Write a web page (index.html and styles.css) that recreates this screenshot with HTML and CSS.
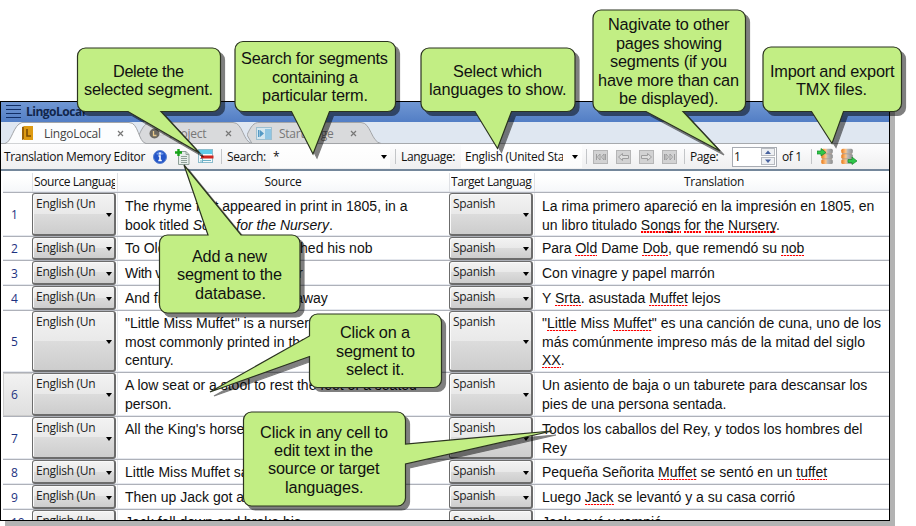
FILE: index.html
```html
<!DOCTYPE html>
<html lang="en">
<head>
<meta charset="utf-8">
<title>LingoLocal</title>
<link rel="stylesheet" href="styles.css">
</head>
<body>
<div class="page">
<main class="window">
  <header class="titlebar">
    <svg class="burger" width="15" height="14" viewBox="0 0 15 14"><path d="M0 .5h15M0 4.5h15M0 8.5h15M0 12.5h15"/></svg>
    <span class="app-name">LingoLocal</span>
  </header>
  <nav class="tabs">
    <div class="tab active">
      <svg class="shape" width="141" height="22" viewBox="0 0 141 22"><path d="M0 21.5C7 20 8 3 17 .5H124C134 .5 133 20 141 21.5"/></svg>
      <svg class="tab-icon" width="13" height="16" viewBox="0 0 13 16"><path d="M1 2L4 1V14L1 15Z" fill="#9a6208"/><rect x="3" y="1" width="9" height="14" fill="#dd9a12"/><path d="M6 4v7h4" stroke="#7a4b05" stroke-width="1.6" fill="none"/></svg>
      <span class="tab-label l1">LingoLocal</span><svg class="close" width="7" height="7" viewBox="0 0 7 7"><path d="M1 1l5 5M6 1l-5 5"/></svg>
    </div>
    <div class="tab second">
      <svg class="shape" width="113" height="22" viewBox="0 0 113 22"><path d="M0 13C4 4 7 .5 12 .5H94C104 .5 104 20 113 21.5H3Z"/></svg>
      <svg class="tab-icon" width="16" height="14" viewBox="0 0 16 14"><rect x="8" y="1" width="7" height="8" fill="#e4e4e4" stroke="#bbb" stroke-width=".6"/><circle cx="5.500" cy="7.500" r="5" fill="#6c6860"/><path d="M4.500 5v4.500h3" stroke="#e8c98c" stroke-width="1.300" fill="none"/></svg>
      <span class="tab-label l2">Project</span><svg class="close" width="7" height="7" viewBox="0 0 7 7"><path d="M1 1l5 5M6 1l-5 5"/></svg>
    </div>
    <div class="tab third">
      <svg class="shape" width="134" height="22" viewBox="0 0 134 22"><path d="M0 13C4 4 7 .5 12 .5H114C124 .5 124 20 134 21.5H5Z"/></svg>
      <svg class="tab-icon" width="16" height="13" viewBox="0 0 16 13"><rect x=".5" y=".5" width="15" height="12" fill="#d5e7f0" stroke="#9dbfd0"/><rect x="9" y="2" width="6" height="10" fill="#8fc5e3"/><path d="M2 3h1.500v7H2zM4 3l4 3.500L4 10z" fill="#5399c4"/></svg>
      <span class="tab-label l3">Start Page</span><svg class="close" width="7" height="7" viewBox="0 0 7 7"><path d="M1 1l5 5M6 1l-5 5"/></svg>
    </div>
  </nav>
  <section class="toolbar">
    <span class="tool-title">Translation Memory Editor</span>
    <svg class="i-info" width="14" height="14" viewBox="0 0 14 14"><circle cx="7" cy="7" r="6.500" fill="#2556c8" stroke="#5c83cf"/><path d="M3 4Q7 0 11 4Q7 6 3 4" fill="#6d97ea"/><path d="M7 2.500v2M5.500 6H7v4.500M5.300 10.500h3.500" stroke="#fff" stroke-width="1.600" fill="none"/></svg>
    <svg class="i-add" width="16" height="16" viewBox="0 0 16 16"><path d="M3.500 2.500H11l3 3v10H3.500Z" fill="#e6eeea" stroke="#8fa098"/><path d="M11 2.500v3h3M6 7.500h6M6 9.500h6M6 11.500h6M6 13.500h6" stroke="#8fa098" fill="none"/><path d="M3.500 0v7M0 3.500h7" stroke="#16a318" stroke-width="2.400"/></svg>
    <svg class="i-del" width="16" height="15" viewBox="0 0 16 15"><rect x=".5" y=".5" width="14" height="13" fill="#f5fafc" stroke="#8bbccc"/><rect x="1" y="1" width="13" height="4" fill="#5fcbea"/><path d="M2 6.500h2M2 9.500h2M2 12h2M5 11.500h8M4.500 5v9" stroke="#6db2c8"/><path d="M3 8h12.500" stroke="#cf2620" stroke-width="3"/></svg>
    <i class="sep"></i>
    <span class="t-search">Search:</span>
    <div class="combo c-search"><span>*</span><i class="arrow"></i></div>
    <i class="sep s2"></i>
    <span class="t-lang">Language:</span>
    <div class="combo c-lang"><span>English (United States)</span><i class="arrow"></i></div>
    <i class="sep s3"></i>
    <div class="pager">
      <svg width="15" height="14" viewBox="0 0 15 14"><rect class="b" x=".5" y=".5" width="14" height="13"/><path class="g" d="M3.500 4v6M7 4v6L4.500 7ZM11 4v6L8.500 7ZM12.500 4v6"/></svg>
      <svg width="15" height="14" viewBox="0 0 15 14"><rect class="b" x=".5" y=".5" width="14" height="13"/><path class="g" d="M2.500 7L6.500 3.500v2h6v3h-6v2Z"/></svg>
      <svg width="15" height="14" viewBox="0 0 15 14"><rect class="b" x=".5" y=".5" width="14" height="13"/><path class="g" d="M12.500 7L8.500 3.500v2h-6v3h6v2Z"/></svg>
      <svg width="15" height="14" viewBox="0 0 15 14"><rect class="b" x=".5" y=".5" width="14" height="13"/><path class="g" d="M2.500 4v6M4 4v6L6.500 7ZM8 4v6L10.500 7ZM12.500 4v6"/></svg>
    </div>
    <i class="sep s4"></i>
    <span class="t-page">Page:</span>
    <div class="spinner"><span>1</span><svg width="15" height="18" viewBox="0 0 15 18"><rect x=".5" y=".5" width="13" height="7" /><rect x=".5" y="9.500" width="13" height="7"/><path d="M4 6h6L7 2.500ZM4 11.500h6L7 15Z"/></svg></div>
    <span class="t-of">of 1</span>
    <i class="sep s5"></i>
    <svg class="i-imp" width="17" height="17" viewBox="0 0 17 17"><use href="#drum" x="4"/><path d="M0 3h4V.5L9 4.500 4 8V6H0Z" fill="#2fc84a" stroke="#18862b" stroke-width=".7"/></svg>
    <svg class="i-exp" width="17" height="17" viewBox="0 0 17 17"><defs><linearGradient id="o"><stop stop-color="#e97916"/><stop offset=".4" stop-color="#fdc58b"/><stop offset=".55" stop-color="#b9b9b9"/><stop offset="1" stop-color="#8d8d8d"/></linearGradient><g id="drum"><rect x=".3" y=".8" width="11.500" height="4.700" rx="1.500" fill="url(#o)"/><rect x=".3" y="6" width="11.500" height="4.700" rx="1.500" fill="url(#o)"/><rect x=".3" y="11.200" width="11.500" height="4.700" rx="1.500" fill="url(#o)"/><path d="M1 5.700h10M1 10.900h10" stroke="#8f7765" stroke-width=".6"/></g></defs><use href="#drum"/><path d="M7 11.500h4V9l5 4-5 3.500v-2H7Z" fill="#2fc84a" stroke="#18862b" stroke-width=".7"/></svg>
  </section>
  <section class="grid">
    <div class="row head"><span></span><span class="h">Source Language</span><span class="h mid">Source</span><span class="h">Target Language</span><span class="h mid tr">Translation</span></div>
    <div class="row r44 first"><b>1</b><button>English (Un<i class="arrow"></i></button><p>The rhyme first appeared in print in 1805, in a<br>book titled <em>Songs for the Nursery</em>.</p><button>Spanish<i class="arrow"></i></button><p>La rima primero apareció en la impresión en 1805, en<br>un libro titulado <u>Songs</u> <u>for</u> <u>the</u> <u>Nursery</u>.</p></div>
    <div class="row r24"><b>2</b><button>English (Un<i class="arrow"></i></button><p>To Old Dame Dob, who patched his nob</p><button>Spanish<i class="arrow"></i></button><p>Para <u>Old</u> Dame <u>Dob</u>, que remendó su <u>nob</u></p></div>
    <div class="row"><b>3</b><button>English (Un<i class="arrow"></i></button><p class="tight">With vinegar and brown paper</p><button>Spanish<i class="arrow"></i></button><p>Con vinagre y papel marrón</p></div>
    <div class="row"><b>4</b><button>English (Un<i class="arrow"></i></button><p>And frightened Miss Muffet away</p><button>Spanish<i class="arrow"></i></button><p>Y <u>Srta</u>. asustada <u>Muffet</u> lejos</p></div>
    <div class="row r62"><b>5</b><button>English (Un<i class="arrow"></i></button><p>"Little Miss Muffet" is a nursery rhyme, one of<br>most commonly printed in the mid-twentieth<br>century.</p><button>Spanish<i class="arrow"></i></button><p>"<u>Little</u> Miss <u>Muffet</u>" es una canción de cuna, uno de los<br>más comúnmente impreso más de la mitad del siglo<br><u>XX</u>.</p></div>
    <div class="row r44 selected"><b>6</b><button>English (Un<i class="arrow"></i></button><p>A low seat or a stool to rest the feet of a seated<br>person.</p><button>Spanish<i class="arrow"></i></button><p>Un asiento de baja o un taburete para descansar los<br>pies de una persona sentada.</p></div>
    <div class="row r43"><b>7</b><button>English (Un<i class="arrow"></i></button><p>All the King's horses</p><button>Spanish<i class="arrow"></i></button><p>Todos los caballos del Rey, y todos los hombres del<br>Rey</p></div>
    <div class="row"><b>8</b><button>English (Un<i class="arrow"></i></button><p>Little Miss Muffet sat on a tuffet</p><button>Spanish<i class="arrow"></i></button><p>Pequeña Señorita <u>Muffet</u> se sentó en un <u>tuffet</u></p></div>
    <div class="row"><b>9</b><button>English (Un<i class="arrow"></i></button><p>Then up Jack got and home</p><button>Spanish<i class="arrow"></i></button><p>Luego <u>Jack</u> se levantó y a su casa corrió</p></div>
    <div class="row"><b>10</b><button>English (Un<i class="arrow"></i></button><p>Jack fell down and broke his</p><button>Spanish<i class="arrow"></i></button><p>Jack cayó y rompió</p></div>
  </section>
</main>
</div>
<svg class="callouts" width="916" height="526" viewBox="0 0 916 526">
  <g class="bubble">
    <path d="M85.500 48H212.500a8 8 0 0 1 8 8V103.500a8 8 0 0 1-8 8H161L199.500 153 128 111.500H85.500a8 8 0 0 1-8-8V56a8 8 0 0 1 8-8Z"/>
    <path d="M243 41.500H387.500a8 8 0 0 1 8 8V103.500a8 8 0 0 1-8 8H329.500L313 154 291.500 111.500H243a8 8 0 0 1-8-8V49.500a8 8 0 0 1 8-8Z"/>
    <path d="M429 48H567a8 8 0 0 1 8 8V103.500a8 8 0 0 1-8 8H511.500L497.500 148.500 475 111.500H429a8 8 0 0 1-8-8V56a8 8 0 0 1 8-8Z"/>
    <path d="M601 10H737.500a8 8 0 0 1 8 8V103.500a8 8 0 0 1-8 8H683L720 151 646 111.500H601a8 8 0 0 1-8-8V18a8 8 0 0 1 8-8Z"/>
    <path d="M771 47H893.500a8 8 0 0 1 8 8V103.500a8 8 0 0 1-8 8H843.500L832 143.500 811.500 111.500H771a8 8 0 0 1-8-8V55a8 8 0 0 1 8-8Z"/>
    <path d="M167.500 235H208L184 165 241 235H292a8 8 0 0 1 8 8V305a8 8 0 0 1-8 8H167.500a8 8 0 0 1-8-8V243a8 8 0 0 1 8-8Z"/>
    <path d="M317.500 314H433.500a8 8 0 0 1 8 8V379.500a8 8 0 0 1-8 8H317.500a8 8 0 0 1-8-8V356.500L210 392 309.500 336V322a8 8 0 0 1 8-8Z"/>
    <path d="M251.500 412H397.500a8 8 0 0 1 8 8V444L552 431 405.500 464V498a8 8 0 0 1-8 8H251.500a8 8 0 0 1-8-8V420a8 8 0 0 1 8-8Z"/>
  </g>
  <g class="notes">
    <text x="113" y="77" textLength="71">Delete the</text><text x="84" y="95" textLength="129">selected segment.</text>
    <text x="241" y="64" textLength="147">Search for segments</text><text x="272" y="82.500" textLength="86">containing a</text><text x="262" y="101" textLength="106">particular term.</text>
    <text x="453" y="77" textLength="89">Select which</text><text x="429" y="95" textLength="137.500">languages to show.</text>
    <text x="608" y="30" textLength="121.500">Nagivate to other</text><text x="616" y="49" textLength="106">pages showing</text><text x="610" y="67" textLength="117">segments (if you</text><text x="598" y="86" textLength="141">have more than can</text><text x="619" y="104" textLength="99.500">be displayed).</text>
    <text x="770" y="77" textLength="124.500">Import and export</text><text x="796" y="95" textLength="71">TMX files.</text>
    <text x="192" y="262" textLength="75">Add a new</text><text x="177" y="280" textLength="105">segment to the</text><text x="195" y="298.500" textLength="71">database.</text>
    <text x="340" y="338" textLength="70">Click on a</text><text x="336" y="356.500" textLength="79">segment to</text><text x="346" y="375" textLength="58.500">select it.</text>
    <text x="260" y="438" textLength="128">Click in any cell to</text><text x="274" y="456" textLength="99">edit text in the</text><text x="268" y="474" textLength="111.500">source or target</text><text x="285" y="493" textLength="78.500">languages.</text>
  </g>
</svg>
</body>
</html>
```
FILE: styles.css
```css
* { box-sizing: border-box; }
body { margin: 0; background: #fff; font: 12px "Open Sans", "Noto Sans", sans-serif; color: #111; }
.page { position: relative; width: 916px; height: 526px; overflow: hidden; padding-top: 101px; }
.window { width: 890px; height: 420px; border: 1px solid #000; overflow: hidden; background: #fff; box-shadow: 5px 5px 0 #b3b3b3; }

.titlebar { height: 20px; display: flex; align-items: center; background: linear-gradient(#7097d3, #527ec5); padding-left: 5px; }
.burger { fill: none; stroke: #122f66; margin-top: -1px; }
.app-name { margin-left: 5px; font-weight: 700; letter-spacing: -.5px; color: #11264c; line-height: 18px; }

.tabs { height: 22px; display: flex; background: #dfe7f1; border-bottom: 1px solid #a6a9ad; color: #777; }
.tab { position: relative; height: 22px; display: flex; align-items: center; flex: none; }
.shape { position: absolute; left: 0; top: 0; fill: #d9dadc; stroke: #a3a5a8; }
.tab > *:not(.shape) { position: relative; }
.active { width: 141px; margin-left: 4px; z-index: 2; color: #444; padding-left: 16px; }
.active .shape { fill: #fcfdfe; }
.second { width: 113px; margin-left: -7px; padding-left: 10px; z-index: 1; }
.third { width: 134px; margin-left: -5px; padding-left: 9px; }
.tab-label { margin-left: 10px; letter-spacing: -.25px; line-height: 24px; padding-top: 2px; white-space: nowrap; flex: none; }
.l1 { width: 73px; }
.l2 { width: 56px; margin-left: 4px; }
.l3 { width: 71px; margin-left: 7px; }
.close { fill: none; stroke: #777; stroke-width: 1.2; flex: none; }

.toolbar { height: 27px; display: flex; align-items: center; background: linear-gradient(#fdfdfe, #efeff0); border-bottom: 2px solid #74879b; padding-left: 3px; white-space: nowrap; }
.toolbar > * { flex: none; line-height: 24px; }
.tool-title { width: 149px; letter-spacing: -.33px; }
.i-add { margin-left: 8px; }
.i-del { margin-left: 7px; }
.sep { width: 1px; height: 15px; background: #c3c5c8; margin-left: 7px; }
.t-search { margin-left: 5px; width: 43px; letter-spacing: -.35px; }
.combo { display: flex; align-items: center; height: 23px; background: linear-gradient(#fff, #fbfbfb); padding: 0 3px 0 4px; }
.combo span { overflow: hidden; flex: none; }
.arrow { width: 0; height: 0; border: 3.5px solid transparent; border-top: 4px solid #000; border-bottom: 0; flex: none; }
.c-search { width: 120px; justify-content: space-between; }
.c-search span { margin-left: -1px; }
.s2 { margin-left: 5px; }
.t-lang { margin-left: 5px; width: 60px; letter-spacing: -.35px; }
.c-lang { width: 121px; justify-content: space-between; padding-right: 4px; }
.c-lang span { width: 98px; letter-spacing: -.28px; padding-top: 1px; }
.s3 { margin-left: 4px; }
.pager { display: flex; gap: 8px; margin-left: 6px; }
.pager .b { fill: #d2d2d3; stroke: #b5b5b6; }
.pager .g { fill: #dedede; stroke: #9d9d9e; }
.s4 { margin-left: 7px; }
.t-page { margin-left: 5px; width: 42px; letter-spacing: -.4px; padding-top: 1px; }
.spinner { width: 45px; height: 20px; border: 1px solid #a8acb3; background: #fff; display: flex; justify-content: space-between; }
.spinner span { font: 12px/17px "Open Sans", sans-serif; padding-left: 1px; }
.spinner rect { fill: #eef0f3; stroke: #b7bac0; }
.spinner path { fill: #49639f; }
.t-of { margin-left: 5px; width: 24px; letter-spacing: -.35px; }
.s5 { margin-left: 5px; }
.i-imp { margin-left: 5px; }
.i-exp { margin-left: 7px; }

.grid { margin-left: 2px; }
.row { display: grid; grid-template-columns: 29px 85px 332px 85px 1fr; height: 25px; border-bottom: 1px solid #aeb1b9; box-shadow: inset 0 -1px #e5e8ee; }
.head { height: 22px; background: linear-gradient(#fff 30%, #f5f7f9); padding-top: 2px; }
.h { border-left: 1px solid #dfe1e5; overflow: hidden; white-space: nowrap; padding: 0 2px 0 1px; line-height: 18px; letter-spacing: -.42px; overflow: clip; overflow-clip-margin: content-box; }
.mid { text-align: center; letter-spacing: -.25px; }
.tr { padding: 0 0 0 4px; }
.r24 { height: 24px; }
.r43 { height: 43px; }
.r44 { height: 44px; }
.r62 { height: 62px; }
.row b { font-weight: 400; color: #1d327f; display: flex; align-items: center; padding-left: 8px; }
.selected b { background: linear-gradient(#f2f2f2, #dfdfdf); border: 1px solid #ccc; border-right: 0; padding-left: 7px; }
.row button { position: relative; font: 12px/20px "Open Sans", sans-serif; letter-spacing: -.28px; color: #222; text-align: left; border: 1px solid #6c6c6c; border-right-width: 2px; border-bottom-width: 2px; border-radius: 3px; background: linear-gradient(#f3f3f3, #e9e9e9 50%, #dcdcdc 50%, #cdcdcd); box-shadow: inset 1px 1px #fafafa; padding: 0 3px; display: flex; align-items: flex-start; margin: 0 1px 0 0; white-space: nowrap; overflow: hidden; }
.row button .arrow { position: absolute; right: 2px; top: calc(50% - 1px); }
.row p { margin: 0; padding: 3px 0 0 7px; font: 14px/18.67px "Liberation Sans", Arial, sans-serif; white-space: nowrap; overflow: hidden; color: #111; border-left: 1px solid #e6e8ec; }
.row .tight { letter-spacing: -.33px; }
.first p { padding-top: 4px; }
.r24 p { padding-top: 2px; }
.row u { text-decoration: none; background: linear-gradient(90deg, #f00 66%, #ffc4c4 66%) 0 100% / 3px 1.5px repeat-x; }

.callouts { position: absolute; left: 0; top: 0; z-index: 10; }
.bubble path { fill: #c2ee84; stroke: #2b3320; stroke-width: 1.2; filter: drop-shadow(4.5px 4.5px 0 rgba(0, 0, 0, .5)); }
.notes { font: 16.3px "Liberation Sans", Arial, sans-serif; fill: #111; }
```
